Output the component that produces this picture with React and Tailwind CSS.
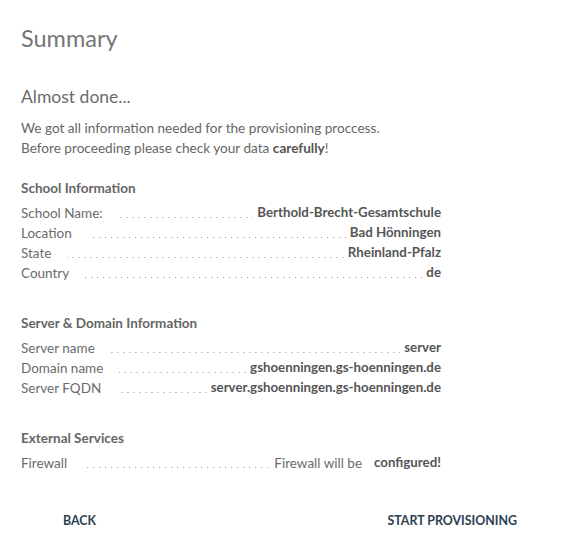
import React from "react";

const sections = [
  {
    title: "School Information",
    rows: [
      { label: "School Name:", value: "Berthold-Brecht-Gesamtschule" },
      { label: "Location", value: "Bad Hönningen" },
      { label: "State", value: "Rheinland-Pfalz" },
      { label: "Country", value: "de" },
    ],
  },
  {
    title: "Server & Domain Information",
    rows: [
      { label: "Server name", value: "server" },
      { label: "Domain name", value: "gshoenningen.gs-hoenningen.de" },
      { label: "Server FQDN", value: "server.gshoenningen.gs-hoenningen.de" },
    ],
  },
  {
    title: "External Services",
    rows: [{ label: "Firewall", note: "Firewall will be", value: "configured!" }],
  },
];

// dotted leader between label and value, anchored to the right
function Leader() {
  return (
    <span className="mb-[5px] ml-2 h-px flex-1 self-end bg-[linear-gradient(to_left,#8f8f8f_1px,transparent_1px)] bg-[length:6px_1px] bg-[position:right_0_top_0] bg-repeat-x" />
  );
}

function Row({ label, note, value }) {
  return (
    <div className="flex h-5 items-center whitespace-nowrap text-[13.5px]">
      <span className="text-[#6b6b6b] pr-2">{label}</span>
      <Leader />
      {note && <span className="text-[#6b6b6b] pl-1.5 pr-2">{note}</span>}
      <span className="pl-1 text-[13.3px] font-bold text-[#555]">{value}</span>
    </div>
  );
}

export default function App() {
  return (
    <div
      className="min-h-[560px] w-[562px] bg-white"
      style={{ fontFamily: "Lato, 'Open Sans', sans-serif" }}
    >
      <div className="px-[21px] pt-[24px]">
        <h1 className="text-[23.5px] leading-7 text-[#757575]">Summary</h1>
        <h2 className="mt-[33px] text-[17.5px] leading-6 text-[#6b6b6b]">Almost done...</h2>
        <p className="mt-[9px] text-[13.6px] leading-5 text-[#666]">
          We got all information needed for the provisioning proccess.
          <br />
          Before proceeding please check your data{" "}
          <span className="font-bold text-[#555]">carefully</span>!
        </p>
        <div className="w-[420px]">
          {sections.map((s, i) => (
            <div key={s.title} className={i === 0 ? "mt-[20px]" : "mt-[30px]"}>
              <h3 className="h-5 text-[13.5px] font-bold leading-5 text-[#666]">{s.title}</h3>
              <div className="mt-[5px]">
                {s.rows.map((r) => (
                  <Row key={r.label} {...r} />
                ))}
              </div>
            </div>
          ))}
        </div>
      </div>
      <div className="mt-[39px] flex justify-between pl-[63px] pr-[45px] text-[12.4px] font-bold text-[#2c3e50]">
        <button>BACK</button>
        <button>START PROVISIONING</button>
      </div>
    </div>
  );
}
